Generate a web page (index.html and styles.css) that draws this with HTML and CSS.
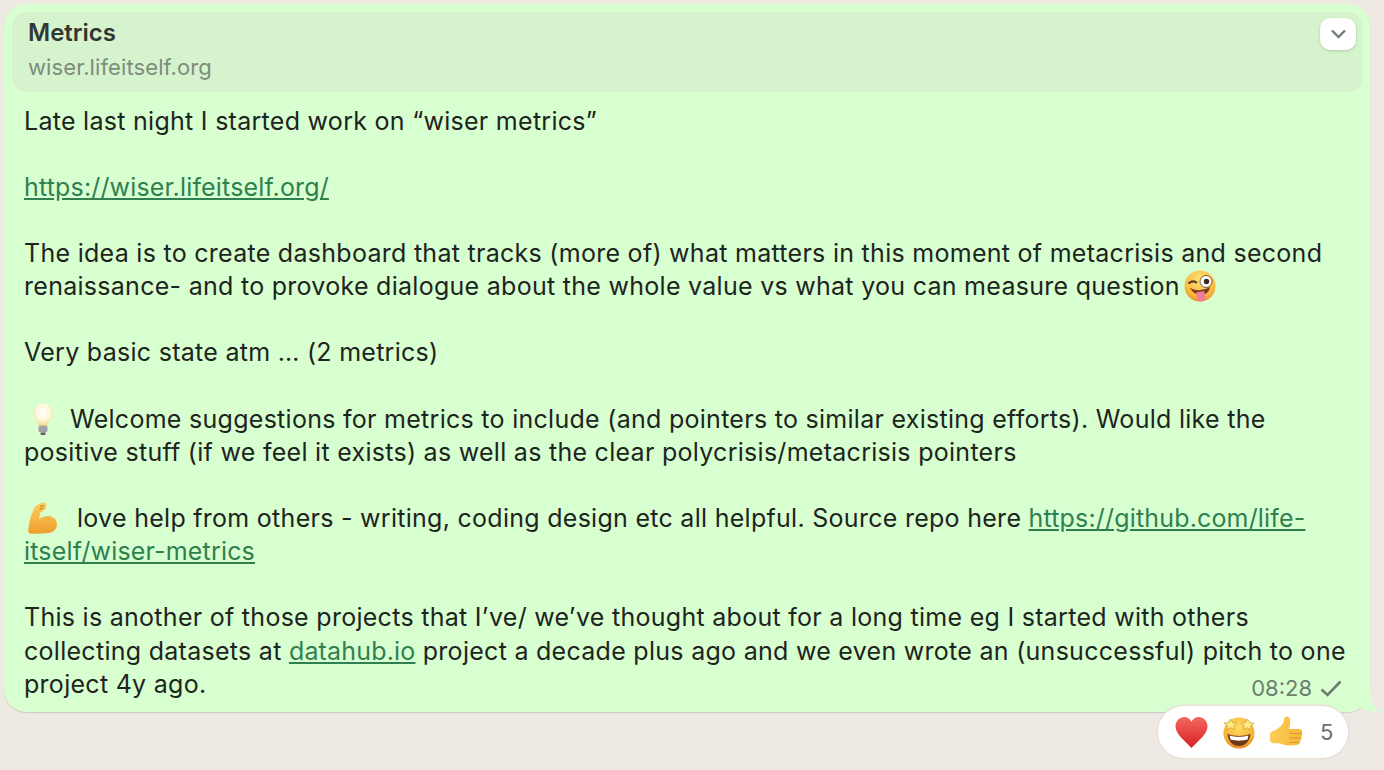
FILE: index.html
```html
<!DOCTYPE html>
<html lang="en">
<head>
<meta charset="utf-8">
<title>Metrics</title>
<link rel="stylesheet" href="styles.css">
</head>
<body>
<main class="chat">
  <article class="bubble">
    <header class="quote">
      <div class="quote-title">Metrics</div>
      <div class="quote-site">wiser.lifeitself.org</div>
      <button class="menu" aria-label="Menu">
        <svg width="15" height="10" viewBox="0 0 15 10"><path d="M1 1.500 7.500 8 14 1.500" fill="none" stroke="#737d80" stroke-width="2.400"/></svg>
      </button>
    </header>
    <div class="message">
      <p>Late last night I started work on “wiser metrics”</p>
      <p class="gap"><a href="#">https://wiser.lifeitself.org/</a></p>
      <p class="gap">The idea is to create dashboard that tracks (more of) what matters in this moment of metacrisis and second<br>renaissance- and to provoke dialogue about the whole value vs what you can measure question <svg class="emoji e-wink" viewBox="0 0 32 32"><defs><radialGradient id="fw" cx="50%" cy="30%" r="75%"><stop offset="0" stop-color="#ffe27a"/><stop offset="0.7" stop-color="#f9b93a"/><stop offset="1" stop-color="#e8862a"/></radialGradient></defs><circle cx="16" cy="16" r="15.500" fill="url(#fw)"/><path d="M4.500 13.500q4.500-4 8.500-.5" fill="none" stroke="#5a3a1c" stroke-width="2"/><circle cx="22" cy="11.500" r="6" fill="#fff" stroke="#7a5a2c" stroke-width="1"/><circle cx="22.500" cy="11.500" r="2.700" fill="#3b2a1c"/><path d="M6 18q10 5 20-1-1 6-6 7.500-9 2.500-14-6.500z" fill="#7a3a20"/><path d="M12 22.500l8-1.500 1.500 6q-.5 4.500-4.500 4.500-3.500 0-4-3.500z" fill="#ef7d96"/></svg></p>
      <p class="gap">Very basic state atm … (2 metrics)</p>
      <p class="gap"><svg class="emoji e-bulb" viewBox="0 0 20 32"><defs><radialGradient id="fb" cx="50%" cy="38%" r="60%"><stop offset="0" stop-color="#fff"/><stop offset="0.6" stop-color="#fff9dc"/><stop offset="1" stop-color="#f3dc8c"/></radialGradient></defs><path d="M10 .5C4.500.5.500 4.500.500 9.800c0 5 4 7.200 5 13h9c1-5.800 5-8 5-13C19.500 4.500 15.500.5 10 .5z" fill="url(#fb)"/><rect x="5.500" y="22.500" width="9" height="7" rx="2" fill="#a2a2a2"/><rect x="7.500" y="29.500" width="5" height="2.500" rx="1" fill="#5f5f5f"/></svg><span class="after-bulb">Welcome suggestions for metrics to include (and pointers to similar existing efforts). Would like the</span><br>positive stuff (if we feel it exists) as well as the clear polycrisis/metacrisis pointers</p>
      <p class="gap"><svg class="emoji e-arm" viewBox="0 0 30 32"><defs><linearGradient id="fa" x1="0" y1="0" x2="0" y2="1"><stop offset="0" stop-color="#fcd060"/><stop offset="1" stop-color="#ee9e2c"/></linearGradient></defs><path d="M7 4.500 12.500 1c2-1 4.500-.8 5.500 1 .8 1.500.5 3.500-.5 5l-3 2.500-2 .5-1.500 7c3-2.500 6.500-3.500 10-3 4.500.6 8 3.500 8 8.500 0 5-4 8-9 8.500-6 .5-13 1-18 .5C.800 31.200 0 30 .3 28 1 21 3 12 7 4.500z" fill="url(#fa)"/><path d="M12 4.500l4-1M11.500 7l4-1" stroke="#b9761c" stroke-width="1" fill="none"/></svg><span class="after-arm">love help from others - writing, coding design etc all helpful. Source repo here </span><a href="#">https://github.com/life-</a><br><a href="#">itself/wiser-metrics</a></p>
      <p class="gap">This is another of those projects that I’ve/ we’ve thought about for a long time eg I started with others<br>collecting datasets at <a href="#">datahub.io</a> project a decade plus ago and we even wrote an (unsuccessful) pitch to one<br>project 4y ago.</p>
    </div>
    <div class="meta">
      <time>08:28</time>
      <svg width="22" height="17" viewBox="0 0 22 17"><path d="M1.500 9.500 7.500 15 20.500 1.500" fill="none" stroke="#6d7e70" stroke-width="2.600"/></svg>
    </div>
    <svg class="tail" width="42" height="33" viewBox="0 0 42 33"><path d="M4 32.500Q14 32.500 21 28 30 32.500 41.500 32 31 30 30 10V0H4z" fill="#d8ffd0"/></svg>
  </article>
  <div class="reactions">
    <svg width="33" height="33" viewBox="0 0 34 34"><defs><linearGradient id="fh" x1="0" y1="0" x2="0" y2="1"><stop offset="0" stop-color="#f4685c"/><stop offset="1" stop-color="#d81f24"/></linearGradient></defs><path d="M17 33C11 26 .5 19 .5 10.500.5 5 5 1 9.500 1c3.300 0 6 1.800 7.500 5 1.500-3.200 4.200-5 7.500-5C29 1 33.500 5 33.500 10.500 33.500 19 23 26 17 33z" fill="url(#fh)"/></svg>
    <svg width="34" height="33" viewBox="0 0 34 33"><defs><radialGradient id="fs" cx="50%" cy="30%" r="75%"><stop offset="0" stop-color="#ffdd66"/><stop offset="0.7" stop-color="#f7b233"/><stop offset="1" stop-color="#df7a22"/></radialGradient></defs><circle cx="17" cy="17" r="15.500" fill="url(#fs)"/><path d="M8.500 3l2 3.600 4.500.5-3.300 2.600.9 4.100-4.100-2.100-4.100 2.100.9-4.100L2 7.100l4.500-.5z" fill="#fcec8a" stroke="#d1962a" stroke-width=".7"/><path d="M25.500 3l2 3.600 4.500.5-3.300 2.600.9 4.100-4.100-2.100-4.100 2.100.9-4.100L19 7.100l4.500-.5z" fill="#fcec8a" stroke="#d1962a" stroke-width=".7"/><path d="M5.500 18c7 2.500 16 2.500 23 0-.5 7.500-5.500 12-11.500 12S6 25.500 5.500 18z" fill="#6b3a18"/><path d="M7.500 19.500c6 1.800 13 1.800 19 0l-1 4c-5 1.500-12 1.500-17 0z" fill="#fff"/></svg>
    <svg width="33" height="33" viewBox="0 0 33 33"><defs><linearGradient id="ft" x1="0" y1="0" x2="1" y2="0"><stop offset="0" stop-color="#fbcd55"/><stop offset="1" stop-color="#f5b83c"/></linearGradient></defs><path d="M0 19c0-2 1.500-3.500 4-4.500 5-2 9.500-5.500 10-11 .2-2.200 1.800-3.500 3.500-3 3 .9 3.500 6 1.500 12.500h10c2.500 0 3.500 1.800 3 3.500.5 1.500.3 3-.7 4 .5 1.500 0 3-1 3.800.3 1.800-.6 3.500-2.300 4.200-2.500 1-8.500 1.400-12.500.8-3-.5-4.500-2-7-2H4c-2.500 0-4-1.500-4-3.500z" fill="url(#ft)"/><path d="M19.500 17.500h12M19.500 22h11.500M19.500 26.500h10" stroke="#d9962a" stroke-width="1" fill="none"/></svg>
    <span class="count">5</span>
  </div>
</main>
</body>
</html>
```
FILE: styles.css
```css
* { box-sizing: border-box; }
html, body { margin: 0; height: 770px; overflow: hidden; }
body { background: #efe9e3; font-family: Inter, "Liberation Sans", sans-serif; color: #1e2420; }
.chat { padding: 4px 14px 0 4px; position: relative; height: 770px; }
.bubble {
  position: relative;
  height: 708px;
  background: #d8ffd0;
  border-radius: 22px;
  padding: 8px;
  box-shadow: 0 1px 1px rgba(90, 80, 70, .22);
}
.quote {
  position: relative;
  height: 80px;
  background: #d5f4cd;
  border-radius: 14px;
  padding: 6px 16px;
}
.quote-title { font-size: 24px; font-weight: 600; line-height: 29px; color: #333733; }
.quote-site { font-size: 22px; letter-spacing: .1px; line-height: 27px; margin-top: 7px; color: #7d8c7d; }
.menu {
  position: absolute;
  top: 6px;
  right: 6px;
  width: 36px;
  height: 32px;
  border: 0;
  border-radius: 10px;
  background: #fff;
  box-shadow: 0 1px 3px rgba(0, 0, 0, .18);
  display: flex;
  align-items: center;
  justify-content: center;
  padding: 0;
}
.message { padding: 12.600px 12px 0; font-size: 25px; letter-spacing: .28px; line-height: 33.120px; white-space: nowrap; }
.message p { margin: 0; }
.message .gap { margin-top: 33.120px; }
.message a { color: #2f7f50; text-decoration: underline; letter-spacing: .17px; }
.emoji { display: inline-block; margin-top: -10px; margin-bottom: -10px; vertical-align: 3px; }
.e-wink { width: 32px; height: 32px; margin-left: -3px; }
.e-bulb { width: 20px; height: 32px; margin-left: 9px; }
.after-bulb { margin-left: 17px; }
.e-arm { width: 30px; height: 32px; margin-left: 4px; }
.after-arm { margin-left: 19px; }
.meta {
  position: absolute;
  right: 28px;
  bottom: 11px;
  display: flex;
  align-items: center;
  gap: 8px;
  color: #6d7e70;
  font-size: 22px;
  line-height: 26px;
}
.tail { position: absolute; right: -12px; bottom: -.5px; }
.reactions {
  position: absolute;
  left: 1158px;
  top: 706px;
  width: 190px;
  height: 52px;
  background: #fff;
  border-radius: 26px;
  box-shadow: 0 0 0 1.500px #e8e1da;
  display: flex;
  align-items: center;
  padding-left: 17px;
  gap: 14px;
}
.count { font-size: 22px; color: #6b6f70; margin-left: 3px; }
```
